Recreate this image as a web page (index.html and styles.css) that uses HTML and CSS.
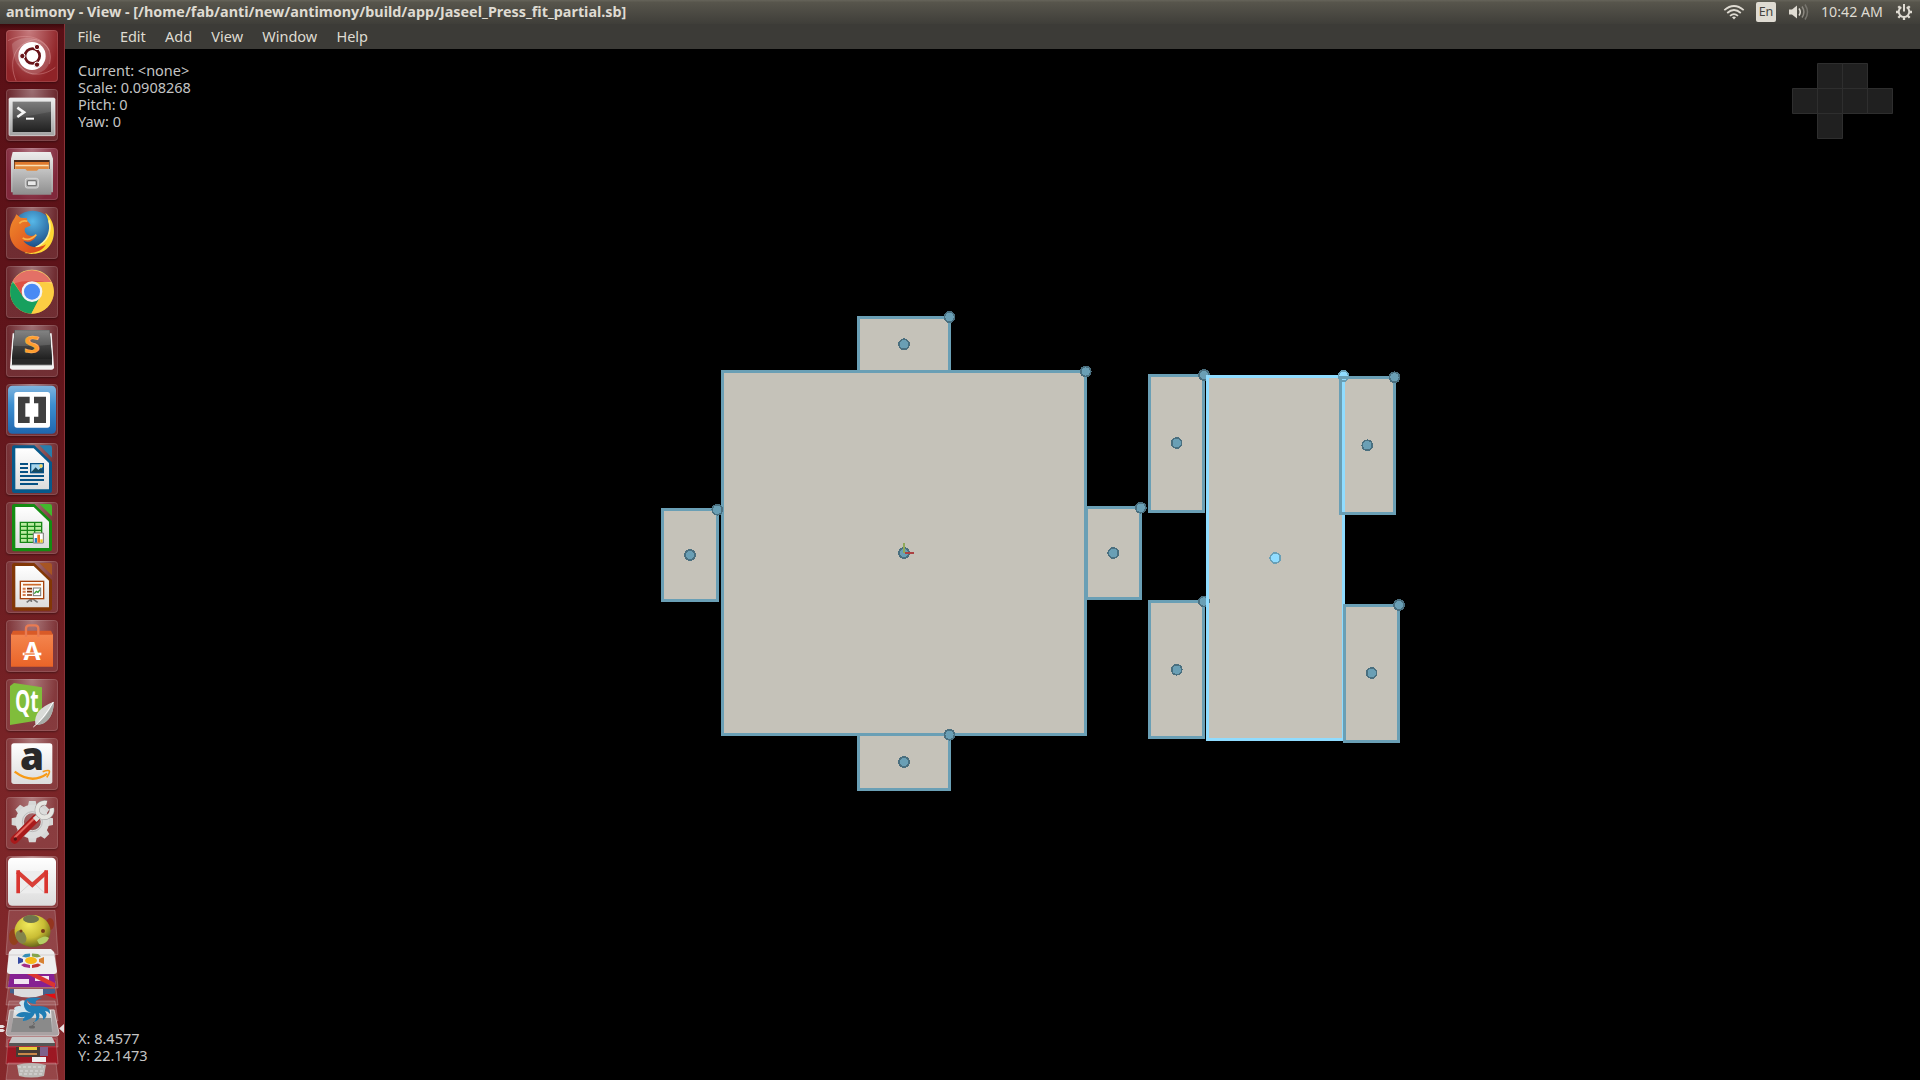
FILE: index.html
```html
<!DOCTYPE html>
<html lang="en">
<head>
<meta charset="utf-8">
<title>antimony - View</title>
<link rel="stylesheet" href="styles.css">
</head>
<body>
<header class="panel">
  <h1 class="title">antimony - View - [/home/fab/anti/new/antimony/build/app/Jaseel_Press_fit_partial.sb]</h1>
  <div class="indicators">
    <svg class="wifi" width="22" height="18" viewBox="0 0 22 18" fill="none" stroke="#dfdbd2" stroke-width="1.7"><path d="M1.300 7.200Q11 -1.200 20.700 7.200"/><path d="M4.200 10Q11 4 17.800 10"/><path d="M7 12.800Q11 9.300 15 12.800"/><path d="M9 14.200Q11 12.600 13 14.200L11 16.500Z" fill="#dfdbd2" stroke="none"/></svg>
    <span class="lang">En</span>
    <svg class="sound" width="22" height="18" viewBox="0 0 22 18" fill="none" stroke-width="1.500"><path d="M1 6.500h3l5-4v13l-5-4H1z" fill="#dfdbd2"/><path d="M11 5.500q2.500 3.500 0 7" stroke="#dfdbd2"/><path d="M14 3.500q3.800 5.500 0 11" stroke="#8d8a82"/><path d="M17 1.500q5 7.500 0 15" stroke="#77756e"/></svg>
    <span class="clock">10:42 AM</span>
    <svg class="gear" width="18" height="18" viewBox="0 0 18 18" fill="none" stroke="#dfdbd2"><path d="M6.300 4.200A5.300 5.300 0 1 0 11.700 4.200" stroke-width="2"/><path d="M9 1v7.500" stroke-width="2"/><path d="M1 9h2.500M14.500 9H17M9 14.500V17M3.300 3.300l2 2M14.700 3.300l-2 2M3.300 14.700l2-2M14.700 14.700l-2-2" stroke-width="2.300"/></svg>
  </div>
</header>
<div class="desktop">
<nav class="launcher">
  <svg class="tile dash" viewBox="0 0 156 156">
    <defs>
      <linearGradient id="silver" x1="0" y1="0" x2="0" y2="1"><stop offset="0" stop-color="#ededed"/><stop offset="1" stop-color="#a2a2a2"/></linearGradient>
      <linearGradient id="cabinet" x1="0" y1="0" x2="0" y2="1"><stop offset="0" stop-color="#c4c4c4"/><stop offset="1" stop-color="#8e8e8e"/></linearGradient>
      <linearGradient id="dark" x1="0" y1="0" x2="0" y2="1"><stop offset="0" stop-color="#707070"/><stop offset=".5" stop-color="#444"/><stop offset="1" stop-color="#202020"/></linearGradient>
      <linearGradient id="orange" x1="0" y1="0" x2="0" y2="1"><stop offset="0" stop-color="#f4854e"/><stop offset="1" stop-color="#ea6428"/></linearGradient>
      <linearGradient id="blue" x1="0" y1="0" x2="0" y2="1"><stop offset="0" stop-color="#7fb4de"/><stop offset=".4" stop-color="#3d8fd0"/><stop offset="1" stop-color="#1f66ae"/></linearGradient>
      <linearGradient id="paper" x1="0" y1="0" x2="0" y2="1"><stop offset="0" stop-color="#fff"/><stop offset="1" stop-color="#dcdcdc"/></linearGradient>
      <radialGradient id="globe" cx=".5" cy=".25" r=".7"><stop offset="0" stop-color="#57b8e8"/><stop offset="1" stop-color="#123d78"/></radialGradient>
      <linearGradient id="fox" x1="0" y1="0" x2="1" y2="1"><stop offset="0" stop-color="#f08a2c"/><stop offset="1" stop-color="#d8411a"/></linearGradient>
      <radialGradient id="apple" cx=".4" cy=".3" r=".7"><stop offset="0" stop-color="#f2ea5c"/><stop offset=".6" stop-color="#c9bd34"/><stop offset="1" stop-color="#6d6a1a"/></radialGradient>
    </defs>
    <g fill="none" stroke="#e9a5a5" stroke-opacity=".4" stroke-width="3"><path d="M30 152C8 100 20 40 88 28C118 36 142 62 130 102"/><path d="M6 32C50 8 112 18 130 62"/><path d="M148 112C110 142 60 140 36 100"/></g><path d="M18 42C50 10 120 20 132 70C138 100 120 130 80 134C40 130 20 90 18 42" fill="#fff" opacity=".16"/><ellipse cx="78" cy="78" rx="41" ry="42" fill="#fff"/><circle cx="79" cy="78" r="22" fill="none" stroke="#681318" stroke-width="8"/><g fill="#681318" stroke="#fff" stroke-width="3"><circle cx="49" cy="78" r="8"/><circle cx="93" cy="51" r="8"/><circle cx="93" cy="104" r="8"/></g></svg>
  <svg class="tile" viewBox="0 0 156 156"><rect x="9" y="27" width="138" height="113" rx="4" fill="url(#silver)" stroke="#eee" stroke-width="2"/><rect x="20" y="38" width="115" height="91" fill="url(#dark)"/><path d="M20 38h115v30L20 90z" fill="#fff" opacity=".09"/><path d="M34 56l20 14-20 14" fill="none" stroke="#f5f5f5" stroke-width="8"/><path d="M60 89h24" stroke="#fff" stroke-width="6"/></svg>
  <svg class="tile files" viewBox="0 0 156 156"><path d="M20 12h114l7 20v101H15V32z" fill="url(#silver)"/><path d="M24 36h107v32H24z" fill="#4b2b1c"/><path d="M26 42h103v28H26z" fill="#df792d"/><path d="M28 50h100v20H28z" fill="#fbe0b4"/><path d="M28 55h100v14H28z" fill="#e28a3e"/><path d="M20 63h38l5 5h30l5-5h38v77H20z" fill="url(#cabinet)"/><rect x="58" y="91" width="39" height="29" rx="6" fill="#bbb" stroke="#d8d8d8" stroke-width="3"/><rect x="64" y="98" width="27" height="15" rx="3" fill="#e9e9e9" stroke="#777" stroke-width="4"/></svg>
  <svg class="tile" viewBox="0 0 156 156"><circle cx="80" cy="75" r="64" fill="url(#globe)"/><path d="M118 17C150 42 154 98 122 126C101 144 70 142 55 138L92 118C132 102 139 60 118 17" fill="#ffd633"/><path d="M129 40C138 72 126 105 88 122" fill="none" stroke="#fff2a0" stroke-width="5"/><path d="M20 42C25 35 28 30 31 22L44 32L64 34C57 43 76 48 73 56L57 63C53 75 61 86 77 87L91 84C86 103 65 109 52 101C66 121 97 127 120 112C106 137 72 146 43 130C9 111 4 72 20 42" fill="url(#fox)"/><path d="M40 49Q50 38 64 43M50 93Q70 105 91 83" stroke="#f9b44a" stroke-width="5" fill="none"/></svg>
  <svg class="tile" viewBox="0 0 156 156"><circle cx="78" cy="77" r="66" fill="#f5c443"/><path d="M78 77L20 46A66 66 0 0 1 136 48H78z" fill="#dd5145"/><path d="M20 46A66 66 0 0 0 76 143L105 91L78 77L51 91z" fill="#17a05e"/><path d="M21 44L52 94L60 54z" fill="#dd5145"/><path d="M102 92L76 143A66 66 0 0 0 136 48H78z" fill="#fccd43"/><circle cx="78" cy="77" r="31" fill="#f3f3f3"/><circle cx="78" cy="77" r="24" fill="#4a8af4"/><path d="M16 54A66 66 0 0 1 140 54Q78 35 16 54" fill="#fff" opacity=".18"/></svg>
  <svg class="tile" viewBox="0 0 156 156"><path d="M20 25h117l7 102q0 7-8 7H20q-8 0-8-7z" fill="#f2f2f2"/><path d="M17 120h121" stroke="#999" stroke-width="3"/><path d="M26 15h105l7 86v18H18v-18z" fill="#292929"/><path d="M26 15h105l7 87H18z" fill="url(#dark)"/><path d="M27 17h103l4 42Q80 65 22 62z" fill="#fff" opacity=".14"/><text class="logo-s" x="53" y="85" textLength="49" lengthAdjust="spacingAndGlyphs">S</text></svg>
  <svg class="tile" viewBox="0 0 156 156"><rect x="6" y="5" width="144" height="144" rx="13" fill="url(#blue)"/><rect x="25" y="24" width="107" height="107" rx="8" fill="#fff"/><path d="M36 38h35v20H58v40h13v19H36zM84 38h36v79H84V98h13V58H84z" fill="#3f3f3f"/></svg>
  <svg class="tile" viewBox="0 0 156 156"><path d="M18 14q0-7 7-7h60l53 51v85q0 7-7 7H25q-7 0-7-7z" fill="#07598b"/><path d="M100 7h31q7 0 7 7v30z" fill="#287dab"/><path d="M28 16h55l46 44v79H28z" fill="url(#paper)"/><path d="M42 63h24M42 75h24M42 87h24M42 99h72M42 111h72M42 123h54" stroke="#075184" stroke-width="6"/><path d="M72 60h42v31H72z" fill="#075184"/><path d="M76 64h34v8l-15 14H76z" fill="#a7d5ec"/><path d="M76 87l13-14 8 8 7-6 7 12z" fill="#16485f"/><circle cx="105" cy="69" r="5" fill="#f6d65a"/></svg>
  <svg class="tile" viewBox="0 0 156 156"><path d="M18 13q0-7 7-7h60l53 51v84q0 7-7 7H25q-7 0-7-7z" fill="#148c12"/><path d="M100 6h31q7 0 7 7v30z" fill="#43b72c"/><path d="M28 15h55l46 44v79H28z" fill="url(#paper)"/><path d="M43 61h64v60H43z" fill="#b8eb9f"/><path d="M43 61h64v60H43zM43 73h64M43 85h64M43 97h64M43 109h64M64 61v60M86 61v60" fill="none" stroke="#168617" stroke-width="4"/><path d="M82 93h30v30H82z" fill="#fff" stroke="#777" stroke-width="3"/><path d="M86 108h7v14h-7z" fill="#207cc2"/><path d="M94 98h8v24h-8z" fill="#ed741a"/><path d="M103 112h7v10h-7z" fill="#e9c81f"/></svg>
  <svg class="tile" viewBox="0 0 156 156"><path d="M18 13q0-7 7-7h60l53 51v85q0 7-7 7H25q-7 0-7-7z" fill="#823706"/><path d="M100 6h31q7 0 7 7v30z" fill="#a75523"/><path d="M28 15h55l46 44v80H28z" fill="url(#paper)"/><path d="M76 113v10M78 112L62 124M78 112L95 124" stroke="#777" stroke-width="5"/><rect x="43" y="61" width="70" height="52" fill="#fffaf3" stroke="#a4420d" stroke-width="4"/><path d="M51 71h54" stroke="#cc6b2b" stroke-width="5"/><path d="M50 83h9M50 92h9M50 102h9" stroke="#d67b4b" stroke-width="6"/><path d="M63 83h15M63 92h15M63 102h15" stroke="#7d300c" stroke-width="5"/><rect x="82" y="81" width="22" height="23" fill="#fff" stroke="#777" stroke-width="3"/><path d="M85 98l6-7 5 3 6-8" fill="none" stroke="#359934" stroke-width="4"/></svg>
  <svg class="tile" viewBox="0 0 156 156"><path d="M15 42h126v98H15z" fill="url(#orange)"/><path d="M21 32h114l6 12H15z" fill="#d95a27"/><path d="M60 50V26q0-10 10-10h17q10 0 10 10v24" fill="none" stroke="#e97b52" stroke-width="7"/><text class="logo-bag" x="78" y="119">A</text><path d="M50 102h56" stroke="#fff" stroke-width="8"/><path d="M55 102h31" stroke="#f07639" stroke-width="4"/></svg>
  <svg class="tile" viewBox="0 0 156 156"><path d="M12 21l12-9 84 13v97L12 138z" fill="#80bd3b"/><text class="logo-qt" x="27" y="99" textLength="71" lengthAdjust="spacingAndGlyphs">Qt</text><path d="M88 136C83 104 104 84 143 68C144 104 125 140 88 136" fill="#d9dbd8"/><path d="M89 136Q120 119 143 68C145 110 118 143 89 136" fill="#a8aca8"/><path d="M82 144Q111 122 142 69" fill="none" stroke="#fff" stroke-width="3"/></svg>
  <svg class="tile" viewBox="0 0 156 156"><rect x="16" y="16" width="123" height="122" rx="8" fill="url(#paper)"/><text class="logo-a" x="78" y="97">a</text><path d="M26 101Q77 140 124 107" fill="none" stroke="#f79a16" stroke-width="7"/><path d="M110 101q23-8 20 2q-2 9-8 15" fill="none" stroke="#f79a16" stroke-width="5"/></svg>
  <svg class="tile" viewBox="0 0 156 156"><g transform="translate(79 74)"><path id="teeth" d="M-10-62h20l4 18h-28zM-10 62h20l4-18h-28zM-62-10v20l18 4v-28zM62-10v20l-18 4v-28z" fill="#d6d7d6"/><use href="#teeth" transform="rotate(45)"/><circle r="38" fill="none" stroke="#dcdddc" stroke-width="25"/><circle r="30" fill="none" stroke="#bbb" stroke-width="3"/></g><path d="M26 128L89 65" stroke="#a91a1b" stroke-width="24" stroke-linecap="round"/><path d="M27 121L82 67" stroke="#e4675f" stroke-width="6" stroke-linecap="round"/><path d="M86 69L107 49" stroke="#deded9" stroke-width="16"/><path d="M122 18A22 22 0 1 0 137 34" fill="none" stroke="#999" stroke-width="15"/><path d="M122 18A22 22 0 1 0 137 34" fill="none" stroke="#e6e6e2" stroke-width="12"/><circle cx="28" cy="126" r="5" fill="#541313"/></svg>
  <svg class="tile" viewBox="0 0 156 156"><rect x="6" y="5" width="144" height="144" rx="13" fill="url(#paper)"/><path d="M36 45h86v67H36z" fill="#ededed"/><path d="M41 111l38-34 37 34" fill="none" stroke="#c8c8c8" stroke-width="2"/><path d="M34 47l45 40 44-40" fill="none" stroke="#d93f37" stroke-width="12"/><path d="M31 43h11v69H31zM115 43h11v69h-11z" fill="#d9352f"/></svg>
  <svg class="stack" width="64" height="171" viewBox="0 0 64 171">
    <g fill="#fff" fill-opacity=".14" stroke="#fff" stroke-opacity=".22"><path d="M9 1.500h46l3 44H6z"/><path d="M9 44h46l3 35H6z"/><path d="M9 72h46l3 24H6z"/><path d="M9 92h46l3 20H6z"/><path d="M9 101h46l3 37H6z"/><path d="M8 130h48l2 25H6z" fill="#c00018" fill-opacity=".4"/><path d="M8 154h48l2 17H6z"/></g>
    <ellipse cx="50" cy="15" rx="4" ry="6" fill="#94351f"/><ellipse cx="14" cy="28" rx="5" ry="8" fill="#93401c"/>
    <ellipse cx="32.500" cy="22" rx="18" ry="16" fill="url(#apple)"/><ellipse cx="31" cy="10" rx="8" ry="4" fill="#6f744d"/><ellipse cx="21" cy="28" rx="5" ry="7" fill="#83834b" transform="rotate(-25 21 28)"/><path d="M37 31q8-6 12-2q-3 7-10 6z" fill="#b5cf65"/><circle cx="43" cy="22" r="2" fill="#793c19"/><circle cx="21" cy="22" r="1.500" fill="#793c19"/>
    <path d="M12 40h39l3 3 3 19q0 3-3 3H10q-3 0-3-3l2-19z" fill="#eee"/><path d="M9 46h46" stroke="#d2cfcf"/>
    <ellipse cx="31" cy="51.500" rx="6" ry="3.500" fill="#f6b818"/><path d="M22 47.500l3-2.500 5-.5v3l-4 1z" fill="#368eb5"/><path d="M32 44.500l6 .5 3 2.500-4 1-5-1z" fill="#85a44e"/><path d="M18 48l5 2v3l-5 2z" fill="#344aa1"/><path d="M39 50l5-2v7l-5-2z" fill="#d78131"/><path d="M21 56l3-1.500 6 1.500v3l-6-1z" fill="#a22c87"/><path d="M32 56l6-1.500 3 1.500-3 2-6 1z" fill="#c23635"/>
    <path d="M10 65h44l2 13H8z" fill="#862192"/><path d="M14 70h15v5H14zM35 67h14v5H35z" fill="#f2e5f1"/><path d="M27 65h10l18 9v5z" fill="#db3530"/>
    <path d="M10 80h45v4q-22 5-45 0z" fill="#45618b"/><path d="M14 80h29v6q-14 5-29 0z" fill="#ddd"/><path d="M44 85h11l1 5z" fill="#e20f13"/>
    <path d="M10 101h44l5 23q0 3-3 3H9q-3 0-3-3z" fill="#aaa2a3" stroke="#d5c8c8"/><path d="M14 101h37l2 22H11z" fill="url(#silver)"/><path d="M13 109h38l1 14H11z" fill="#8a8a8a"/>
    <path d="M32 98Q23 87 19 94q3 6 12 7Q18 94 14 99q1 6 15 4" fill="#d1e5ed"/><path d="M31 104q-12-3-15 3 8 3 17-2Q22 107 23 112q9-1 12-8 3 5-1 9 7-2 5-9 5 2 4 7 6-4 2-9 3 0 5 3 1-8-11-8Q26 98 27 91q3 4 9 4-2-4 6-6-18-2-18 5-1 7 7 10" fill="#207db4"/><path d="M33 113q3 2-1 4" stroke="#666" fill="none"/><ellipse cx="32" cy="118" rx="3" ry="1.500" fill="#666"/>
    <path d="M12 128h40l3 6H9z" fill="#c9c9c9"/><path d="M9 134h46v3H9z" fill="#555"/>
    <path d="M16 138h24v10H16z" fill="#453b35"/><path d="M19 138h18v3H19z" fill="#e7ce3b"/><path d="M18 144h19v2H18z" fill="#c98948"/><path d="M40 138h8v9h-8z" fill="#80618b"/><path d="M32 148h14v5H32z" fill="#eee"/>
    <path d="M17 156q14-4 29 0l-2 11q-13 3-25 0z" fill="#bbb9b5"/><path d="M18 158h26M20 162h24M19 165h24" stroke="#dedede" stroke-dasharray="3 2"/>
    <path d="M0 116h3l2 1.500-2 1.500H0zM0 120h3l2 1.500-2 1.500H0zM64 115v9l-5-4.500z" fill="#e8e0e0"/>
  </svg>
</nav>
<main class="window">
  <div class="menubar"><span>File</span><span>Edit</span><span>Add</span><span>View</span><span>Window</span><span>Help</span></div>
  <section class="viewport">
    <svg class="scene" width="1855" height="1031" viewBox="65 49 1855 1031">
      <g class="fills"><path d="M858.500 317.500h91v54h-91zM722.500 371.500h363v363h-363zM858.500 734.500h91v55h-91zM662.500 509.500h55v91h-55zM1086.500 507.500h54v91h-54zM1149.500 375.500h54v136h-54zM1149.500 601.500h54v136h-54zM1207.500 376.500h136v363h-136zM1340.500 377.500h54v136h-54zM1344.500 605.500h54v136h-54z"/></g>
      <g class="edges"><path d="M858.500 317.500h91v54h-91zM722.500 371.500h363v363h-363zM858.500 734.500h91v55h-91zM662.500 509.500h55v91h-55zM1086.500 507.500h54v91h-54zM1149.500 375.500h54v136h-54zM1149.500 601.500h54v136h-54z"/></g>
      <g class="dots"><circle cx="949.500" cy="317" r="5"/><circle cx="904" cy="344.300" r="5"/><circle cx="1085.700" cy="371.500" r="5"/><circle cx="904" cy="553" r="5"/><circle cx="949.500" cy="734.700" r="5"/><circle cx="904" cy="762" r="5"/><circle cx="717.300" cy="509.700" r="5"/><circle cx="690" cy="555" r="5"/><circle cx="1140.700" cy="507.700" r="5"/><circle cx="1113.300" cy="553" r="5"/><circle cx="1204" cy="375" r="5"/><circle cx="1176.700" cy="443" r="5"/><circle cx="1204" cy="601.500" r="5"/><circle cx="1176.700" cy="669.700" r="5"/></g>
      <path d="M904 543v10" stroke="#90a959" stroke-width="2"/><path d="M905 553h9" stroke="#ac4142" stroke-width="2"/>
      <g class="selected"><path d="M1207.500 376.500h136v363h-136z"/><circle cx="1343.500" cy="376" r="5"/><circle cx="1275.300" cy="558" r="5"/></g>
      <g class="edges"><path d="M1340.500 377.500h54v136h-54zM1344.500 605.500h54v136h-54z"/></g>
      <g class="dots"><circle cx="1394.500" cy="377.300" r="5"/><circle cx="1367.300" cy="445.300" r="5"/><circle cx="1399" cy="605" r="5"/><circle cx="1371.700" cy="673" r="5"/></g>
      <path class="cube" d="M1817.500 63.500h25v25h-25zM1842.500 63.500h25v25h-25zM1792.500 88.500h25v25h-25zM1817.500 88.500h25v25h-25zM1842.500 88.500h25v25h-25zM1867.500 88.500h25v25h-25zM1817.500 113.500h25v25h-25z"/>
    </svg>
    <div class="readout"><p>Current: &lt;none&gt;</p><p>Scale: 0.0908268</p><p>Pitch: 0</p><p>Yaw: 0</p></div>
    <div class="readout"><p>X: 8.4577</p><p>Y: 22.1473</p></div>
  </section>
</main>
</div>
</body>
</html>
```
FILE: styles.css
```css
* { box-sizing: border-box; margin: 0; padding: 0; }
body {
  width: 1920px; height: 1080px; overflow: hidden;
  display: flex; flex-direction: column;
  background: #000; color: #dfdbd2;
  font-family: "Noto Sans", "Open Sans", sans-serif; font-size: 14.5px;
}
.panel {
  height: 24px; flex: none; display: flex; align-items: center; justify-content: space-between;
  padding: 0 7px 0 6px;
  background: linear-gradient(#66645a 0, #57554c 10%, #3f3e39 100%);
}
.title { font-size: 14.36px; font-weight: 700; line-height: 24px; white-space: nowrap; }
.indicators { display: flex; align-items: center; height: 24px; }
.lang {
  width: 20px; height: 20px; margin-left: 11px; border-radius: 2px;
  background: #dfdbd2; color: #45443f; font-size: 12.5px; line-height: 20px; text-align: center;
}
.sound { margin-left: 12px; }
.clock { width: 62px; margin-left: 11px; font-size: 14.2px; white-space: nowrap; line-height: 24px; }
.gear { margin-left: 12px; }
.desktop { flex: 1; display: flex; min-height: 0; }
.launcher {
  width: 65px; flex: none; display: flex; flex-direction: column; align-items: center; gap: 7px;
  padding-top: 6px; border-right: 1px solid #8a3338;
  background: linear-gradient(#3c090c 0, #5a1016 6px, #5f141a 30%, #792427 70%, #85282b 100%);
}
.tile {
  width: 52px; height: 52px; flex: none; border-radius: 4px; overflow: visible;
  background: radial-gradient(ellipse at 50% 0, rgba(255,255,255,.4), rgba(255,255,255,.11) 65%);
  box-shadow: inset 0 0 0 1px rgba(255,255,255,.13), 0 1px 2px rgba(0,0,0,.35);
}
.dash { background: radial-gradient(ellipse at 45% 0, #c67a7d, #8f2327 75%); }
.files { background: radial-gradient(ellipse at 50% 0, #b07380, #80283b 75%); }
.stack { flex: none; margin-top: -6px; }
.logo-s { font: 700 70px "Open Sans", sans-serif; fill: #ff9d2e; stroke: #ffc67a; stroke-width: 1; }
.logo-bag { font: 700 74px "Open Sans", sans-serif; text-anchor: middle; fill: #fff; }
.logo-qt { font: 700 92px "Open Sans", sans-serif; fill: #fff; }
.logo-a { font: 800 116px "Open Sans", sans-serif; text-anchor: middle; fill: #292929; }
.window { flex: 1; display: flex; flex-direction: column; min-width: 0; }
.menubar {
  height: 25px; flex: none; display: flex; gap: 19.2px; padding-left: 12.5px;
  background: #3c3b37; line-height: 25px;
}
.viewport {
  flex: 1; position: relative; display: flex; flex-direction: column; justify-content: space-between;
  padding: 13px 13px 16px; background: #000;
}
.scene { position: absolute; left: 0; top: 0; }
.readout { position: relative; color: #c4c4c4; line-height: 17px; }
.fills { fill: #c5c2b9; }
.edges { fill: none; stroke: #6a9fb5; stroke-width: 3; }
.dots { fill: #6a9fb5; stroke: #4a6f7f; stroke-width: 1.8; shape-rendering: crispEdges; }
.selected path { fill: none; stroke: #90dcff; stroke-width: 3; }
.selected circle { fill: #90dcff; stroke: #6a9fb5; stroke-width: 1.8; shape-rendering: crispEdges; }
.cube { fill: #202020; stroke: #2e2e2e; stroke-width: 1; }
```
